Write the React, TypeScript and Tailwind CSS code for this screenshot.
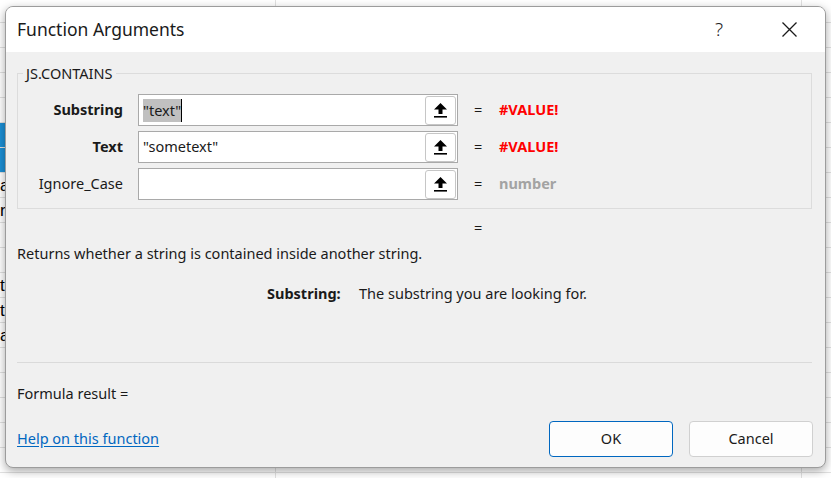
import React from "react";

const rows = Array.from({ length: 20 }, (_, i) => i);

const cellText: Record<number, string> = {
  6: "ai",
  7: "r",
  10: "t",
  11: "t",
  12: "a",
};

function UploadIcon() {
  return (
    <svg width="13" height="15" viewBox="0 0 13 15">
      <polygon points="6.5,0 0,6.5 4.5,6.5 4.5,11 8.5,11 8.5,6.5 13,6.5" fill="#000" />
      <rect x="0" y="13" width="13" height="1.6" fill="#000" />
    </svg>
  );
}

function ArgRow({
  label,
  bold,
  children,
  result,
  resultClass,
}: {
  label: string;
  bold?: boolean;
  children?: React.ReactNode;
  result: string;
  resultClass: string;
}) {
  return (
    <div className="flex items-center h-[32px]">
      <div className={`w-[105px] text-right text-[14.5px] ${bold ? "font-bold" : ""}`}>{label}</div>
      <div className="ml-[15px] w-[320px] h-[32px] border border-[#a9a9a9] bg-white flex items-center pl-[4px] pr-px">
        <div className="flex items-center text-[14.5px] flex-1">{children}</div>
        <div className="w-[31px] h-[29px] rounded-[3px] border border-[#c6c6c6] bg-white flex items-center justify-center">
          <UploadIcon />
        </div>
      </div>
      <div className="ml-[16px] w-[25px] text-[14.5px]">=</div>
      <div className={`text-[14.5px] font-bold ${resultClass}`}>{result}</div>
    </div>
  );
}

export default function App() {
  return (
    <div className="relative w-[831px] h-[478px] overflow-hidden bg-white font-['Noto_Sans',sans-serif] text-[#1a1a1a]">
      {/* spreadsheet behind the dialog */}
      <div className="flex flex-col">
        <div className="h-[23px] border-b border-[#e1e1e1] flex">
          <div className="w-[276px] border-r border-[#e1e1e1]" />
          <div className="w-[526px] border-r border-[#e1e1e1]" />
        </div>
        {rows.map((i) => (
          <div key={i} className="h-[25px] border-b border-[#e1e1e1] flex">
            <div
              className={`w-[276px] border-r border-[#e1e1e1] text-[17px] leading-[25px] font-['Liberation_Sans',sans-serif] text-black ${
                i === 4 || i === 5 ? "bg-[#1b8fd5]" : ""
              }`}
            >
              {cellText[i] ?? ""}
            </div>
            <div className="w-[526px] border-r border-[#e1e1e1]" />
          </div>
        ))}
      </div>

      {/* dialog window */}
      <div className="absolute left-[5px] top-[6px] w-[821px] h-[462px] rounded-[8px] border border-[#9c9c9c] bg-[#f0f0f0] overflow-hidden flex flex-col shadow-[0_3px_10px_rgba(0,0,0,0.35)]">
        <div className="h-[45px] bg-white flex items-center pl-[11px] pr-[13px]">
          <div className="text-[17.5px]">Function Arguments</div>
          <div className="ml-auto flex items-center gap-[24px]">
            <div className="w-[46px] flex justify-center text-[19px] font-light text-[#222]">?</div>
            <div className="w-[46px] flex justify-center">
              <svg width="15" height="15" viewBox="0 0 15 15">
                <path d="M0.5 0.5 L14.5 14.5 M14.5 0.5 L0.5 14.5" stroke="#1a1a1a" strokeWidth="1.3" />
              </svg>
            </div>
          </div>
        </div>

        <div className="flex flex-col pl-[11px] pr-[13px]">
          <div className="relative mt-[21px] border border-[#dcdcdc] pt-[20px] pb-[8px] flex flex-col gap-[5px]">
            <span className="absolute -top-[11px] left-[5px] px-[3px] bg-[#f0f0f0] text-[14.5px] leading-[20px]">
              JS.CONTAINS
            </span>
            <ArgRow label="Substring" bold result="#VALUE!" resultClass="text-[#ff0000]">
              <span className="bg-[#c0c0c0] leading-[23px]">"text"</span>
              <span className="w-px h-[23px] bg-black" />
            </ArgRow>
            <ArgRow label="Text" bold result="#VALUE!" resultClass="text-[#ff0000]">
              <span>"sometext"</span>
            </ArgRow>
            <ArgRow label="Ignore_Case" result="number" resultClass="text-[#a3a3a3]" />
          </div>

          <div className="mt-[8px] h-[20px] leading-[20px] pl-[457px] text-[14.5px]">=</div>
          <div className="mt-[6px] h-[20px] leading-[20px] text-[14.5px]">
            Returns whether a string is contained inside another string.
          </div>
          <div className="mt-[20px] h-[20px] leading-[20px] pl-[250px] flex text-[14.5px]">
            <span className="w-[92px] font-bold">Substring:</span>
            <span>The substring you are looking for.</span>
          </div>
          <div className="mt-[59px] h-px bg-[#dadada]" />
          <div className="mt-[20px] h-[20px] leading-[20px] text-[14.5px]">Formula result =</div>
          <div className="mt-[18px] h-[36px] flex items-center text-[14.5px]">
            <a className="text-[#0067c0] underline underline-offset-2">Help on this function</a>
            <div className="ml-auto flex gap-[16px] -mr-px">
              <div className="w-[124px] h-[36px] rounded-[4px] border border-[#0067c0] bg-[#fdfdfd] flex items-center justify-center">
                OK
              </div>
              <div className="w-[124px] h-[36px] rounded-[4px] border border-[#d0d0d0] bg-[#fdfdfd] flex items-center justify-center">
                Cancel
              </div>
            </div>
          </div>
        </div>
      </div>
    </div>
  );
}
